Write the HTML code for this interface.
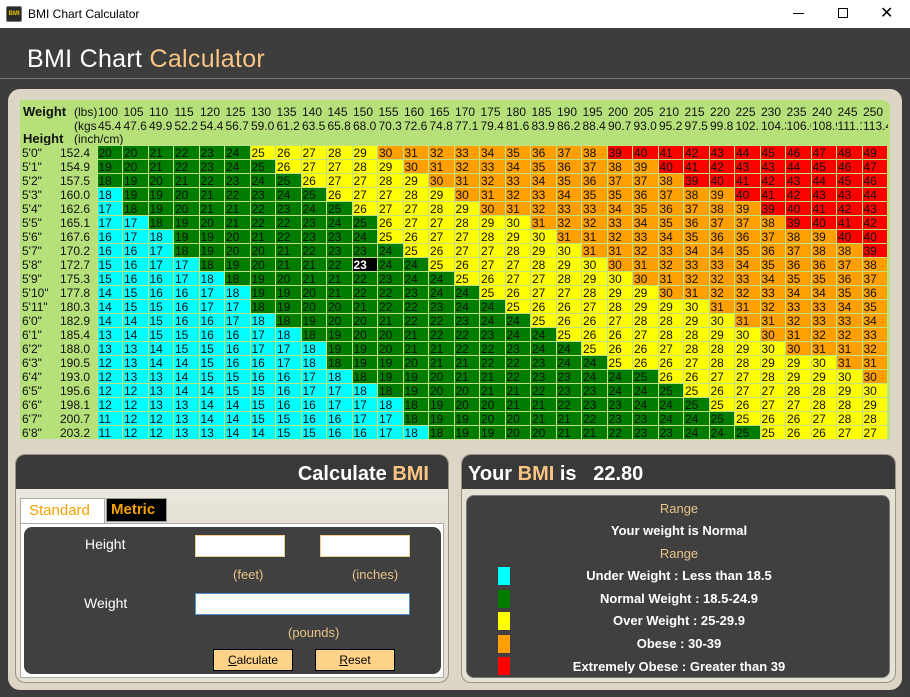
<!DOCTYPE html>
<html><head><meta charset="utf-8"><style>
*{margin:0;padding:0;box-sizing:border-box}
body{width:910px;height:697px;overflow:hidden;background:#3d3d3d;font-family:"Liberation Sans",sans-serif;position:relative}
.abs{position:absolute}
#tb{left:0;top:0;width:910px;height:28px;background:#fff;font-size:12px;color:#000}
#beige{left:8px;top:89px;width:894px;height:601px;background:#ddd6c6;border-radius:12px}
#green{left:20px;top:100px;width:870px;height:339px;background:#b6e07a;border-radius:0 8px 0 0}
table{border-collapse:collapse;table-layout:fixed;font-size:12px}
td{white-space:nowrap;overflow:hidden;height:14px;line-height:14px;padding:0 0 0 1px;color:#111}
#grid td{border:1px solid rgba(200,230,140,.55);height:13px;line-height:12px}
#grid tr{height:14px}
.c{background:#00ffff}.g{background:#007c00}.y{background:#ffff00}.o{background:#ffa000}.r{background:#ff0000}
.b{background:#000;color:#fff!important;font-weight:bold}
#grid td.l{border:none;background:transparent;padding-left:2px}
.panel{border:1px solid #9a9488;border-radius:10px;background:#e6e1d5;overflow:hidden}
.hd{background:#393939;height:34px;color:#fff;font-weight:bold;font-size:20px;line-height:38px}
.pe{color:#fac584}
.lbl{color:#fff;font-size:14px}
.sm{color:#e9c389;font-size:13px}
.inp{background:#fff;border:1px solid #f3cf8f}
.btn{background:#ffd28a;border:1px solid #000;font-size:12px;text-align:center;line-height:20px;color:#000}
.rt{position:absolute;left:0;width:424px;text-align:center;color:#fff;font-weight:bold;font-size:13px}
.sq{position:absolute;left:31px;width:12px;height:18px}
</style></head><body>
<div id="tb" class="abs">
<div class="abs" style="left:6px;top:6px;width:16px;height:16px;background:#2a2a2a;border:1px solid #777;border-radius:2px;color:#e8c600;font-size:6px;font-weight:bold;line-height:14px;text-align:center">BMI</div>
<div class="abs" style="left:28px;top:7px">BMI Chart Calculator</div>
<div class="abs" style="left:793px;top:13px;width:11px;height:1px;background:#000"></div>
<div class="abs" style="left:838px;top:8px;width:10px;height:10px;border:1px solid #000"></div>
<div class="abs" style="left:880px;top:3px;font-size:16px">✕</div>
</div>
<div class="abs" style="left:27px;top:45px;font-size:25px;color:#fff;letter-spacing:.3px">BMI Chart <span class="pe">Calculator</span></div>
<div class="abs" style="left:0;top:78px;width:910px;height:1px;background:#777"></div>
<div id="beige" class="abs"></div>
<div id="green" class="abs"></div>
<table class="abs" style="left:20px;top:105px;width:867.5px">
<colgroup><col style="width:53px"><col style="width:24px"><col span="31" style="width:25.5px"></colgroup>
<tr><td style="padding-left:3px;font-weight:bold;font-size:13px">Weight</td><td>(lbs)</td><td>100<td>105<td>110<td>115<td>120<td>125<td>130<td>135<td>140<td>145<td>150<td>155<td>160<td>165<td>170<td>175<td>180<td>185<td>190<td>195<td>200<td>205<td>210<td>215<td>220<td>225<td>230<td>235<td>240<td>245<td>250</td></tr>
<tr><td></td><td>(kgs)</td><td>45.4<td>47.6<td>49.9<td>52.2<td>54.4<td>56.7<td>59.0<td>61.2<td>63.5<td>65.8<td>68.0<td>70.3<td>72.6<td>74.8<td>77.1<td>79.4<td>81.6<td>83.9<td>86.2<td>88.4<td>90.7<td>93.0<td>95.2<td>97.5<td>99.8<td>102.1<td>104.3<td>106.6<td>108.9<td>111.1<td>113.4</td></tr>
<tr><td style="padding-left:3px;font-weight:bold;font-size:13px;height:12px;line-height:12px">Height</td><td colspan="3" style="height:12px;line-height:12px">(inch/cm)</td></tr>
</table>
<table id="grid" class="abs" style="left:20px;top:145px;width:867.5px">
<colgroup><col style="width:38px"><col style="width:39px"><col span="31" style="width:25.5px"></colgroup>
<tr><td class=l>5'0"<td class=l>152.4<td class=g>20<td class=g>20<td class=g>21<td class=g>22<td class=g>23<td class=g>24<td class=y>25<td class=y>26<td class=y>27<td class=y>28<td class=y>29<td class=o>30<td class=o>31<td class=o>32<td class=o>33<td class=o>34<td class=o>35<td class=o>36<td class=o>37<td class=o>38<td class=r>39<td class=r>40<td class=r>41<td class=r>42<td class=r>43<td class=r>44<td class=r>45<td class=r>46<td class=r>47<td class=r>48<td class=r>49</tr>
<tr><td class=l>5'1"<td class=l>154.9<td class=g>19<td class=g>20<td class=g>21<td class=g>22<td class=g>23<td class=g>24<td class=g>25<td class=y>26<td class=y>27<td class=y>27<td class=y>28<td class=y>29<td class=o>30<td class=o>31<td class=o>32<td class=o>33<td class=o>34<td class=o>35<td class=o>36<td class=o>37<td class=o>38<td class=o>39<td class=r>40<td class=r>41<td class=r>42<td class=r>43<td class=r>43<td class=r>44<td class=r>45<td class=r>46<td class=r>47</tr>
<tr><td class=l>5'2"<td class=l>157.5<td class=g>18<td class=g>19<td class=g>20<td class=g>21<td class=g>22<td class=g>23<td class=g>24<td class=g>25<td class=y>26<td class=y>27<td class=y>27<td class=y>28<td class=y>29<td class=o>30<td class=o>31<td class=o>32<td class=o>33<td class=o>34<td class=o>35<td class=o>36<td class=o>37<td class=o>37<td class=o>38<td class=r>39<td class=r>40<td class=r>41<td class=r>42<td class=r>43<td class=r>44<td class=r>45<td class=r>46</tr>
<tr><td class=l>5'3"<td class=l>160.0<td class=c>18<td class=g>19<td class=g>19<td class=g>20<td class=g>21<td class=g>22<td class=g>23<td class=g>24<td class=g>25<td class=y>26<td class=y>27<td class=y>27<td class=y>28<td class=y>29<td class=o>30<td class=o>31<td class=o>32<td class=o>33<td class=o>34<td class=o>35<td class=o>35<td class=o>36<td class=o>37<td class=o>38<td class=o>39<td class=r>40<td class=r>41<td class=r>42<td class=r>43<td class=r>43<td class=r>44</tr>
<tr><td class=l>5'4"<td class=l>162.6<td class=c>17<td class=g>18<td class=g>19<td class=g>20<td class=g>21<td class=g>21<td class=g>22<td class=g>23<td class=g>24<td class=g>25<td class=y>26<td class=y>27<td class=y>27<td class=y>28<td class=y>29<td class=o>30<td class=o>31<td class=o>32<td class=o>33<td class=o>33<td class=o>34<td class=o>35<td class=o>36<td class=o>37<td class=o>38<td class=o>39<td class=r>39<td class=r>40<td class=r>41<td class=r>42<td class=r>43</tr>
<tr><td class=l>5'5"<td class=l>165.1<td class=c>17<td class=c>17<td class=g>18<td class=g>19<td class=g>20<td class=g>21<td class=g>22<td class=g>22<td class=g>23<td class=g>24<td class=g>25<td class=y>26<td class=y>27<td class=y>27<td class=y>28<td class=y>29<td class=y>30<td class=o>31<td class=o>32<td class=o>32<td class=o>33<td class=o>34<td class=o>35<td class=o>36<td class=o>37<td class=o>37<td class=o>38<td class=r>39<td class=r>40<td class=r>41<td class=r>42</tr>
<tr><td class=l>5'6"<td class=l>167.6<td class=c>16<td class=c>17<td class=c>18<td class=g>19<td class=g>19<td class=g>20<td class=g>21<td class=g>22<td class=g>23<td class=g>23<td class=g>24<td class=y>25<td class=y>26<td class=y>27<td class=y>27<td class=y>28<td class=y>29<td class=y>30<td class=o>31<td class=o>31<td class=o>32<td class=o>33<td class=o>34<td class=o>35<td class=o>36<td class=o>36<td class=o>37<td class=o>38<td class=o>39<td class=r>40<td class=r>40</tr>
<tr><td class=l>5'7"<td class=l>170.2<td class=c>16<td class=c>16<td class=c>17<td class=g>18<td class=g>19<td class=g>20<td class=g>20<td class=g>21<td class=g>22<td class=g>23<td class=g>23<td class=g>24<td class=y>25<td class=y>26<td class=y>27<td class=y>27<td class=y>28<td class=y>29<td class=y>30<td class=o>31<td class=o>31<td class=o>32<td class=o>33<td class=o>34<td class=o>34<td class=o>35<td class=o>36<td class=o>37<td class=o>38<td class=o>38<td class=r>39</tr>
<tr><td class=l>5'8"<td class=l>172.7<td class=c>15<td class=c>16<td class=c>17<td class=c>17<td class=g>18<td class=g>19<td class=g>20<td class=g>21<td class=g>21<td class=g>22<td class=b>23<td class=g>24<td class=g>24<td class=y>25<td class=y>26<td class=y>27<td class=y>27<td class=y>28<td class=y>29<td class=y>30<td class=o>30<td class=o>31<td class=o>32<td class=o>33<td class=o>33<td class=o>34<td class=o>35<td class=o>36<td class=o>36<td class=o>37<td class=o>38</tr>
<tr><td class=l>5'9"<td class=l>175.3<td class=c>15<td class=c>16<td class=c>16<td class=c>17<td class=c>18<td class=g>18<td class=g>19<td class=g>20<td class=g>21<td class=g>21<td class=g>22<td class=g>23<td class=g>24<td class=g>24<td class=y>25<td class=y>26<td class=y>27<td class=y>27<td class=y>28<td class=y>29<td class=y>30<td class=o>30<td class=o>31<td class=o>32<td class=o>32<td class=o>33<td class=o>34<td class=o>35<td class=o>35<td class=o>36<td class=o>37</tr>
<tr><td class=l>5'10"<td class=l>177.8<td class=c>14<td class=c>15<td class=c>16<td class=c>16<td class=c>17<td class=c>18<td class=g>19<td class=g>19<td class=g>20<td class=g>21<td class=g>22<td class=g>22<td class=g>23<td class=g>24<td class=g>24<td class=y>25<td class=y>26<td class=y>27<td class=y>27<td class=y>28<td class=y>29<td class=y>29<td class=o>30<td class=o>31<td class=o>32<td class=o>32<td class=o>33<td class=o>34<td class=o>34<td class=o>35<td class=o>36</tr>
<tr><td class=l>5'11"<td class=l>180.3<td class=c>14<td class=c>15<td class=c>15<td class=c>16<td class=c>17<td class=c>17<td class=g>18<td class=g>19<td class=g>20<td class=g>20<td class=g>21<td class=g>22<td class=g>22<td class=g>23<td class=g>24<td class=g>24<td class=y>25<td class=y>26<td class=y>26<td class=y>27<td class=y>28<td class=y>29<td class=y>29<td class=y>30<td class=o>31<td class=o>31<td class=o>32<td class=o>33<td class=o>33<td class=o>34<td class=o>35</tr>
<tr><td class=l>6'0"<td class=l>182.9<td class=c>14<td class=c>14<td class=c>15<td class=c>16<td class=c>16<td class=c>17<td class=c>18<td class=g>18<td class=g>19<td class=g>20<td class=g>20<td class=g>21<td class=g>22<td class=g>22<td class=g>23<td class=g>24<td class=g>24<td class=y>25<td class=y>26<td class=y>26<td class=y>27<td class=y>28<td class=y>28<td class=y>29<td class=y>30<td class=o>31<td class=o>31<td class=o>32<td class=o>33<td class=o>33<td class=o>34</tr>
<tr><td class=l>6'1"<td class=l>185.4<td class=c>13<td class=c>14<td class=c>15<td class=c>15<td class=c>16<td class=c>16<td class=c>17<td class=c>18<td class=g>18<td class=g>19<td class=g>20<td class=g>20<td class=g>21<td class=g>22<td class=g>22<td class=g>23<td class=g>24<td class=g>24<td class=y>25<td class=y>26<td class=y>26<td class=y>27<td class=y>28<td class=y>28<td class=y>29<td class=y>30<td class=o>30<td class=o>31<td class=o>32<td class=o>32<td class=o>33</tr>
<tr><td class=l>6'2"<td class=l>188.0<td class=c>13<td class=c>13<td class=c>14<td class=c>15<td class=c>15<td class=c>16<td class=c>17<td class=c>17<td class=c>18<td class=g>19<td class=g>19<td class=g>20<td class=g>21<td class=g>21<td class=g>22<td class=g>22<td class=g>23<td class=g>24<td class=g>24<td class=y>25<td class=y>26<td class=y>26<td class=y>27<td class=y>28<td class=y>28<td class=y>29<td class=y>30<td class=o>30<td class=o>31<td class=o>31<td class=o>32</tr>
<tr><td class=l>6'3"<td class=l>190.5<td class=c>12<td class=c>13<td class=c>14<td class=c>14<td class=c>15<td class=c>16<td class=c>16<td class=c>17<td class=c>18<td class=g>18<td class=g>19<td class=g>19<td class=g>20<td class=g>21<td class=g>21<td class=g>22<td class=g>22<td class=g>23<td class=g>24<td class=g>24<td class=y>25<td class=y>26<td class=y>26<td class=y>27<td class=y>28<td class=y>28<td class=y>29<td class=y>29<td class=y>30<td class=o>31<td class=o>31</tr>
<tr><td class=l>6'4"<td class=l>193.0<td class=c>12<td class=c>13<td class=c>13<td class=c>14<td class=c>15<td class=c>15<td class=c>16<td class=c>16<td class=c>17<td class=c>18<td class=g>18<td class=g>19<td class=g>19<td class=g>20<td class=g>21<td class=g>21<td class=g>22<td class=g>23<td class=g>23<td class=g>24<td class=g>24<td class=g>25<td class=y>26<td class=y>26<td class=y>27<td class=y>27<td class=y>28<td class=y>29<td class=y>29<td class=y>30<td class=o>30</tr>
<tr><td class=l>6'5"<td class=l>195.6<td class=c>12<td class=c>12<td class=c>13<td class=c>14<td class=c>14<td class=c>15<td class=c>15<td class=c>16<td class=c>17<td class=c>17<td class=c>18<td class=g>18<td class=g>19<td class=g>20<td class=g>20<td class=g>21<td class=g>21<td class=g>22<td class=g>23<td class=g>23<td class=g>24<td class=g>24<td class=g>25<td class=y>25<td class=y>26<td class=y>27<td class=y>27<td class=y>28<td class=y>28<td class=y>29<td class=y>30</tr>
<tr><td class=l>6'6"<td class=l>198.1<td class=c>12<td class=c>12<td class=c>13<td class=c>13<td class=c>14<td class=c>14<td class=c>15<td class=c>16<td class=c>16<td class=c>17<td class=c>17<td class=c>18<td class=g>18<td class=g>19<td class=g>20<td class=g>20<td class=g>21<td class=g>21<td class=g>22<td class=g>23<td class=g>23<td class=g>24<td class=g>24<td class=g>25<td class=y>25<td class=y>26<td class=y>27<td class=y>27<td class=y>28<td class=y>28<td class=y>29</tr>
<tr><td class=l>6'7"<td class=l>200.7<td class=c>11<td class=c>12<td class=c>12<td class=c>13<td class=c>14<td class=c>14<td class=c>15<td class=c>15<td class=c>16<td class=c>16<td class=c>17<td class=c>17<td class=g>18<td class=g>19<td class=g>19<td class=g>20<td class=g>20<td class=g>21<td class=g>21<td class=g>22<td class=g>23<td class=g>23<td class=g>24<td class=g>24<td class=g>25<td class=y>25<td class=y>26<td class=y>26<td class=y>27<td class=y>28<td class=y>28</tr>
<tr><td class=l>6'8"<td class=l>203.2<td class=c>11<td class=c>12<td class=c>12<td class=c>13<td class=c>13<td class=c>14<td class=c>14<td class=c>15<td class=c>15<td class=c>16<td class=c>16<td class=c>17<td class=c>18<td class=g>18<td class=g>19<td class=g>19<td class=g>20<td class=g>20<td class=g>21<td class=g>21<td class=g>22<td class=g>23<td class=g>23<td class=g>24<td class=g>24<td class=g>25<td class=y>25<td class=y>26<td class=y>26<td class=y>27<td class=y>27</tr>
</table>

<!-- Left panel -->
<div class="abs panel" style="left:15px;top:454px;width:434px;height:229px">
<div class="hd" style="text-align:right;padding-right:19px">Calculate <span class="pe">BMI</span></div>
<div class="abs" style="left:0;top:34px;width:432px;height:14px;background:#ebe6dc"></div>
</div>
<div class="abs" style="left:20px;top:498px;width:85px;height:26px;background:#fff;border:1px solid #aaa;border-bottom:none;color:#f5a200;font-size:15px;line-height:24px;padding-left:8px">Standard</div>
<div class="abs" style="left:106px;top:498px;width:61px;height:24px;background:#000;border:1px solid #999;color:#f5a200;font-size:15px;font-weight:bold;line-height:22px;padding-left:4px">Metric</div>
<div class="abs" style="left:20px;top:523px;width:424px;height:155px;background:#fff;border:1px solid #aaa"></div>
<div class="abs" style="left:24px;top:527px;width:417px;height:147px;background:#404040;border-radius:8px"></div>
<div class="abs lbl" style="left:85px;top:536px">Height</div>
<div class="abs inp" style="left:195px;top:535px;width:90px;height:22px"></div>
<div class="abs inp" style="left:320px;top:535px;width:90px;height:22px"></div>
<div class="abs sm" style="left:233px;top:567px">(feet)</div>
<div class="abs sm" style="left:352px;top:567px">(inches)</div>
<div class="abs lbl" style="left:84px;top:595px">Weight</div>
<div class="abs inp" style="left:195px;top:593px;width:215px;height:22px;border-color:#4a8fd0"></div>
<div class="abs sm" style="left:288px;top:625px">(pounds)</div>
<div class="abs btn" style="left:213px;top:649px;width:80px;height:22px"><u>C</u>alculate</div>
<div class="abs btn" style="left:315px;top:649px;width:80px;height:22px"><u>R</u>eset</div>

<!-- Right panel -->
<div class="abs panel" style="left:461px;top:454px;width:435px;height:229px">
<div class="hd" style="padding-left:6px">Your <span class="pe">BMI</span> is &nbsp;&nbsp;22.80</div>
</div>
<div class="abs" style="left:466px;top:495px;width:424px;height:183px;background:#404040;border-radius:8px;border:1px solid #777">
<div class="rt" style="top:5px;font-weight:normal;color:#e9c389">Range</div>
<div class="rt" style="top:27px">Your weight is Normal</div>
<div class="rt" style="top:50px;font-weight:normal;color:#e9c389">Range</div>
<div class="sq" style="top:71px;background:#00ffff"></div>
<div class="rt" style="top:72px">Under Weight : Less than 18.5</div>
<div class="sq" style="top:94px;background:#007c00"></div>
<div class="rt" style="top:95px">Normal Weight : 18.5-24.9</div>
<div class="sq" style="top:116px;background:#ffff00"></div>
<div class="rt" style="top:117px">Over Weight : 25-29.9</div>
<div class="sq" style="top:139px;background:#ffa000"></div>
<div class="rt" style="top:140px">Obese : 30-39</div>
<div class="sq" style="top:161px;background:#ff0000"></div>
<div class="rt" style="top:163px">Extremely Obese : Greater than 39</div>
</div>
</body></html>
